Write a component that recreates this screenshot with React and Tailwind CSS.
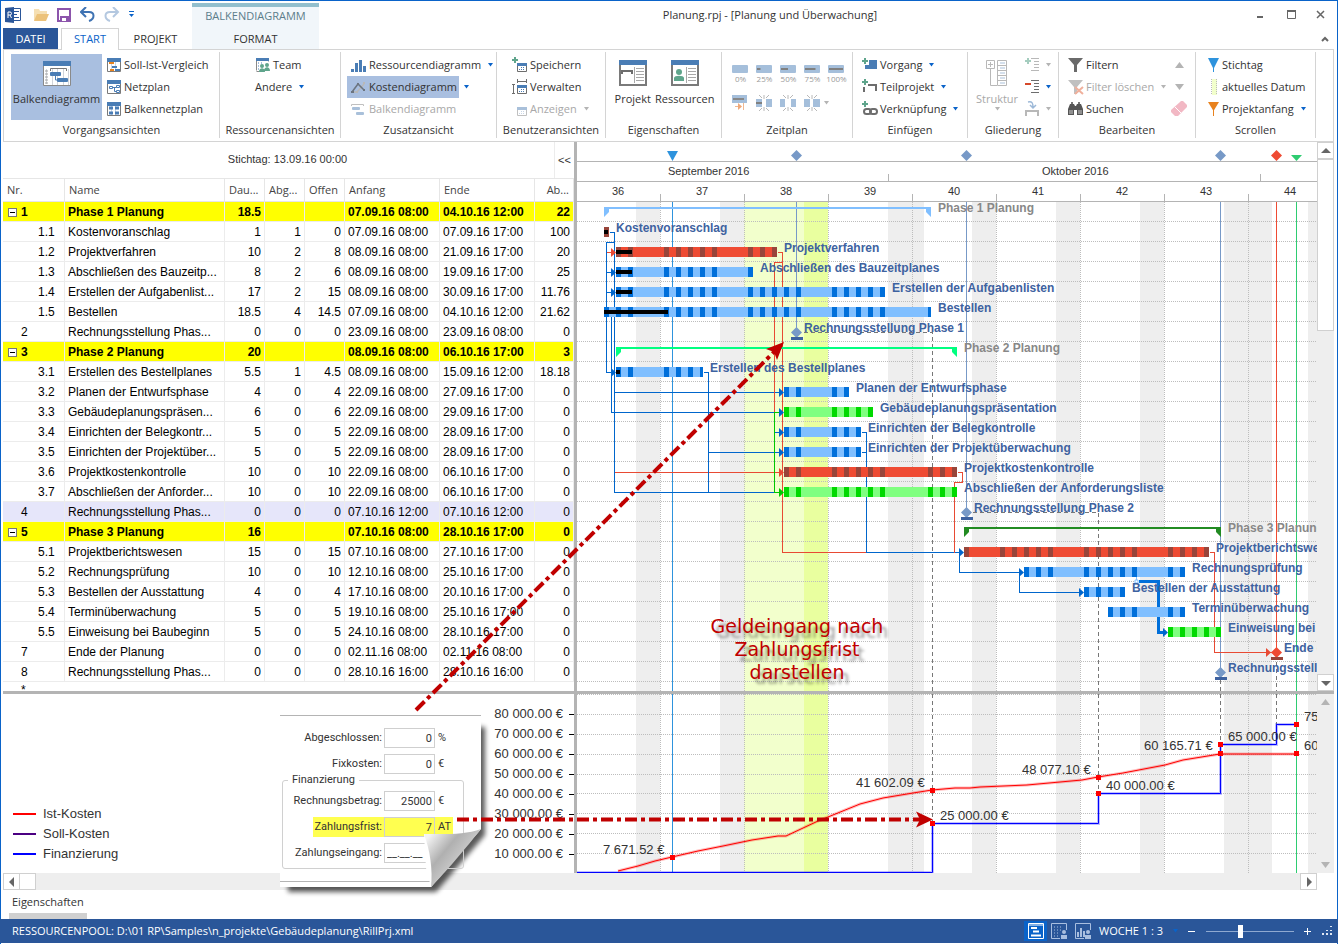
import { useState } from 'react';

const ROW_H = 20;
const AXIS_H = 60;
const DAY_W = 12;
const WEEKS_DRAWN = 20;
const PROJECT_WEEKS = [36, 37, 38, 39, 40, 41, 42, 43, 44];

// Day 0 is Monday, 5 September 2016 (week 36)
const dayX = (day, hour = 0) => day * DAY_W - 1 + hour / 2;
const HOLIDAYS = [28, 56, 57];
const isFree = (day) => day % 7 > 4 || HOLIDAYS.includes(day);

const COLORS = {
    blue: ['#80bfff', '#006fda'],
    red: ['#ef4b33', '#98453a'],
    green: ['#80ff80', '#00d900'],
};

// start / end: [day, hour]
const TASKS = [
    { nr: '1', name: 'Phase 1 Planung', label: 'Phase 1 Planung', d: '18.5', a: '', o: '', from: '07.09.16 08:00', to: '04.10.16 12:00', ab: '22', kind: 'phase', start: [2, 8], end: [29, 14], color: '#80bfff' },
    { nr: '1.1', name: 'Kostenvoranschlag', label: 'Kostenvoranschlag', d: '1', a: '1', o: '0', from: '07.09.16 08:00', to: '07.09.16 17:00', ab: '100', kind: 'bar', start: [2, 8], end: [2, 18], color: 'red', done: 4 },
    { nr: '1.2', name: 'Projektverfahren', label: 'Projektverfahren', d: '10', a: '2', o: '8', from: '08.09.16 08:00', to: '21.09.16 17:00', ab: '20', kind: 'bar', start: [3, 8], end: [16, 18], color: 'red', done: 16 },
    { nr: '1.3', name: 'Abschließen des Bauzeitp...', label: 'Abschließen des Bauzeitplanes', d: '8', a: '2', o: '6', from: '08.09.16 08:00', to: '19.09.16 17:00', ab: '25', kind: 'bar', start: [3, 8], end: [14, 18], color: 'blue', done: 16 },
    { nr: '1.4', name: 'Erstellen der Aufgabenlist...', label: 'Erstellen der Aufgabenlisten', d: '17', a: '2', o: '15', from: '08.09.16 08:00', to: '30.09.16 17:00', ab: '11.76', kind: 'bar', start: [3, 8], end: [25, 18], color: 'blue', done: 16 },
    { nr: '1.5', name: 'Bestellen', label: 'Bestellen', d: '18.5', a: '4', o: '14.5', from: '07.09.16 08:00', to: '04.10.16 12:00', ab: '21.62', kind: 'bar', start: [2, 8], end: [29, 14], color: 'blue', done: 64 },
    { nr: '2', name: 'Rechnungsstellung Phas...', label: 'Rechnungsstellung Phase 1', d: '0', a: '0', o: '0', from: '23.09.16 08:00', to: '23.09.16 08:00', ab: '0', kind: 'milestone', start: [18, 8], color: '#7799c7' },
    { nr: '3', name: 'Phase 2 Planung', label: 'Phase 2 Planung', d: '20', a: '', o: '', from: '08.09.16 08:00', to: '06.10.16 17:00', ab: '3', kind: 'phase', start: [3, 8], end: [31, 18], color: '#00ff80' },
    { nr: '3.1', name: 'Erstellen des Bestellplanes', label: 'Erstellen des Bestellplanes', d: '5.5', a: '1', o: '4.5', from: '08.09.16 08:00', to: '15.09.16 12:00', ab: '18.18', kind: 'bar', start: [3, 8], end: [10, 14], color: 'blue', done: 4 },
    { nr: '3.2', name: 'Planen der Entwurfsphase', label: 'Planen der Entwurfsphase', d: '4', a: '0', o: '4', from: '22.09.16 08:00', to: '27.09.16 17:00', ab: '0', kind: 'bar', start: [17, 8], end: [22, 18], color: 'blue' },
    { nr: '3.3', name: 'Gebäudeplanungspräsen...', label: 'Gebäudeplanungspräsentation', d: '6', a: '0', o: '6', from: '22.09.16 08:00', to: '29.09.16 17:00', ab: '0', kind: 'bar', start: [17, 8], end: [24, 18], color: 'green' },
    { nr: '3.4', name: 'Einrichten der Belegkontr...', label: 'Einrichten der Belegkontrolle', d: '5', a: '0', o: '5', from: '22.09.16 08:00', to: '28.09.16 17:00', ab: '0', kind: 'bar', start: [17, 8], end: [23, 18], color: 'blue' },
    { nr: '3.5', name: 'Einrichten der Projektüber...', label: 'Einrichten der Projektüberwachung', d: '5', a: '0', o: '5', from: '22.09.16 08:00', to: '28.09.16 17:00', ab: '0', kind: 'bar', start: [17, 8], end: [23, 18], color: 'blue' },
    { nr: '3.6', name: 'Projektkostenkontrolle', label: 'Projektkostenkontrolle', d: '10', a: '0', o: '10', from: '22.09.16 08:00', to: '06.10.16 17:00', ab: '0', kind: 'bar', start: [17, 8], end: [31, 18], color: 'red' },
    { nr: '3.7', name: 'Abschließen der Anforder...', label: 'Abschließen der Anforderungsliste', d: '10', a: '0', o: '10', from: '22.09.16 08:00', to: '06.10.16 17:00', ab: '0', kind: 'bar', start: [17, 8], end: [31, 18], color: 'green' },
    { nr: '4', name: 'Rechnungsstellung Phas...', label: 'Rechnungsstellung Phase 2', d: '0', a: '0', o: '0', from: '07.10.16 12:00', to: '07.10.16 12:00', ab: '0', kind: 'milestone', start: [32, 12], color: '#7799c7' },
    { nr: '5', name: 'Phase 3 Planung', label: 'Phase 3 Planung', d: '16', a: '', o: '', from: '07.10.16 08:00', to: '28.10.16 17:00', ab: '0', kind: 'phase', start: [32, 8], end: [53, 18], color: '#228b22' },
    { nr: '5.1', name: 'Projektberichtswesen', label: 'Projektberichtswesen', d: '15', a: '0', o: '15', from: '07.10.16 08:00', to: '27.10.16 17:00', ab: '0', kind: 'bar', start: [32, 8], end: [52, 18], color: 'red' },
    { nr: '5.2', name: 'Rechnungsprüfung', label: 'Rechnungsprüfung', d: '10', a: '0', o: '10', from: '12.10.16 08:00', to: '25.10.16 17:00', ab: '0', kind: 'bar', start: [37, 8], end: [50, 18], color: 'blue' },
    { nr: '5.3', name: 'Bestellen der Ausstattung', label: 'Bestellen der Ausstattung', d: '4', a: '0', o: '4', from: '17.10.16 08:00', to: '20.10.16 17:00', ab: '0', kind: 'bar', start: [42, 8], end: [45, 18], color: 'blue' },
    { nr: '5.4', name: 'Terminüberwachung', label: 'Terminüberwachung', d: '5', a: '0', o: '5', from: '19.10.16 08:00', to: '25.10.16 17:00', ab: '0', kind: 'bar', start: [44, 8], end: [50, 18], color: 'blue' },
    { nr: '5.5', name: 'Einweisung bei Baubeginn', label: 'Einweisung bei Baubeginn', d: '5', a: '0', o: '5', from: '24.10.16 08:00', to: '28.10.16 17:00', ab: '0', kind: 'bar', start: [49, 8], end: [53, 18], color: 'green' },
    { nr: '7', name: 'Ende der Planung', label: 'Ende der Planung', d: '0', a: '0', o: '0', from: '02.11.16 08:00', to: '02.11.16 08:00', ab: '0', kind: 'milestone', start: [58, 8], color: '#ef4b33' },
    { nr: '8', name: 'Rechnungsstellung Phas...', label: 'Rechnungsstellung Phase 3', d: '0', a: '0', o: '0', from: '28.10.16 16:00', to: '28.10.16 16:00', ab: '0', kind: 'milestone', start: [53, 16], color: '#7799c7' },
];

const BLUE = '#0066cc';
const RED = '#e84a33';
const GREEN = '#00c800';

const LINKS = [
    { c: BLUE, d: 'M32 90H37V350H202' },
    { c: BLUE, d: 'M37 100H29V230H34' },
    { c: BLUE, d: 'M29 130H34M29 150H34' },
    { c: RED, d: 'M29 110H34' },
    { c: BLUE, d: 'M34 170V270H202' },
    { c: BLUE, d: 'M37 250H202' },
    { c: RED, d: 'M37 330H202' },
    { c: BLUE, d: 'M126 230H131V350M131 310H202' },
    { c: RED, d: 'M200 110H205V410H289' },
    { c: RED, d: 'M205 120H197V270' },
    { c: GREEN, d: 'M202 270H197V350H202' },
    { c: BLUE, d: 'M197 290H202' },
    { c: BLUE, d: 'M284 290H289V410H382M284 310H289' },
    { c: RED, d: 'M380 330H385V340H377V410' },
    { c: BLUE, d: 'M382 410V430H442V450H502' },
    { c: RED, d: 'M632 410H637V510H694' },
];

const ARROWS = [
    [39, 110, RED], [39, 130, BLUE], [39, 150, BLUE], [39, 230, BLUE],
    [207, 250, BLUE], [207, 270, BLUE], [207, 290, BLUE], [207, 310, BLUE], [207, 330, RED], [207, 350, GREEN],
    [387, 410, BLUE], [447, 430, BLUE], [507, 450, BLUE], [591, 490, BLUE], [694, 510, RED],
];

const COST_Y = (v) => 178.5 - v * 0.00198;

const COST_POINTS = '41,177 61,172 78,167 95,163 121,157 146,152 175,146 201,142 209,142 241,127 251,123 283,110 306,104 336,99 355,96 378,94 393,94 403,93 450,91 505,86 521,83 546,79 588,71 606,66 643,60 719,60';

const COST_LABELS = [
    [26, 160, '7 671.52 €'], [279, 93, '41 602.09 €'], [363, 126, '25 000.00 €'], [445, 80, '48 077.10 €'],
    [529, 96, '40 000.00 €'], [567, 56, '60 165.71 €'], [651, 47, '65 000.00 €'], [727, 27, '75 000.00 €'], [727, 56, '60 165.71 €'],
];

function Caret({ off }) {
    return (
        <svg width="7" height="4" viewBox="0 0 7 4" className="shrink-0">
            <path d="M1 0h5L3.500 3.500z" fill={off ? '#b4b4b4' : '#0a63c9'} />
        </svg>
    );
}

function Icon({ w = 16, h = 16, children }) {
    return (
        <svg width={w} height={h} viewBox={`0 0 ${w} ${h}`} className="shrink-0" fill="none">
            {children}
        </svg>
    );
}

function Sheet({ children }) {
    return (
        <Icon>
            <path d="M1.500 1.500h13v13h-13z" fill="#fff" stroke="#7a7a7a" />
            <path d="M1 1h14v4H1z" fill="#4a7db5" />
            <path d="M5.500 5v9M9.500 5v9" stroke="#c5d5e8" />
            {children}
        </Icon>
    );
}

function Plus({ x = 0, y = 0, c = '#5fa58c' }) {
    return <path d={`M${x + 2} ${y}h2v2h2v2h-2v2h-2v-2h-2v-2h2z`} fill={c} />;
}

/* Ribbon icons */
const SollIst = () => (
    <Sheet><path d="M3 6h5M4 13h4" stroke="#e8821e" strokeWidth="2" /><path d="M6 10h5M9 13h5" stroke="#4a7db5" strokeWidth="2" /></Sheet>
);
const Netz = () => (
    <Icon>
        <path d="M1.500 1.500h13v13h-13z" fill="#fff" stroke="#7a7a7a" />
        <path d="M1 1h14v4H1z" fill="#4a7db5" />
        <path d="M3.500 7.500h3v2h-3zM10.500 6.500h3v2h-3zM10.500 11.500h3v2h-3zM6.500 8.500h4M8.500 8.500v4h2" stroke="#4a7db5" />
    </Icon>
);
const BalkenNetz = () => (
    <Sheet><path d="M3 7h4M9 7h4M3 12h4M9 12h4" stroke="#4a7db5" strokeWidth="3" /></Sheet>
);
const BigGantt = () => (
    <Icon w={30} h={28}>
        <path d="M1.500 1.500h27v24h-27z" fill="#fff" stroke="#8a8a8a" />
        <path d="M1 1h28v5H1z" fill="#4a7db5" />
        <path d="M4.500 9v15M10.500 9v16M15.500 9v16M21.500 9v16M26.500 9v16" stroke="#d0d4da" />
        <path d="M3 11h3M3 14h3M3 17h3M3 20h3M3 23h3" stroke="#a0a0a0" />
        <path d="M8.500 11V8.500h16V11" stroke="#777" />
        <rect x="8" y="12" width="11" height="4" rx="1" fill="#4a7db5" />
        <rect x="15" y="18" width="11" height="4" rx="1" fill="#4a7db5" />
        <path d="M13.500 16v4h2" stroke="#4a7db5" />
    </Icon>
);
const Team = () => (
    <Icon>
        <path d="M1.500 13.500v-12h12v3M1.500 14.500h3" stroke="#8a8a8a" />
        <path d="M1 1h13v3H1z" fill="#4a7db5" />
        <path d="M3 6h1M3 9h1M3 12h1M6 6h1" stroke="#4a7db5" />
        <circle cx="7" cy="9" r="2" fill="#5fa58c" /><circle cx="12" cy="8" r="2" fill="#5fa58c" />
        <path d="M4 15c0-5 6-5 6 0zM9 14c0-5 6-5 6 0z" fill="#5fa58c" />
    </Icon>
);
const Bars = () => (
    <Icon><path d="M0 12h3v3H0zM4 6h3v9H4zM8 3h3v12H8zM12 9h3v6h-3z" fill="#4a7db5" /></Icon>
);
const CostLine = () => (
    <Icon>
        <path d="M2 13h4l7-8" stroke="#b8b8b8" strokeWidth="1.500" />
        <path d="M1 13l6-8 6 6" stroke="#6c7580" strokeWidth="1.500" />
        <path d="M0 12h3v2H0zM6 4h2v2H6zM12 10h2v2h-2z" fill="#6c7580" />
        <path d="M12 3h2v2h-2zM5 12h2v2H5z" fill="#b8b8b8" />
    </Icon>
);
const GhostBars = () => (
    <Icon><path d="M.500 5V3.500h12V5" stroke="#c0c0c0" /><rect x="1" y="6" width="8" height="3" rx="1" fill="#a9c0da" /><rect x="5" y="11" width="8" height="3" rx="1" fill="#a9c0da" /></Icon>
);
const Window = ({ off, plus, dim }) => (
    <Icon>
        {plus && <Plus />}
        <path d="M5.500 6.500h9v8h-9z" fill="#fff" stroke={off ? '#c0c0c0' : '#6d6d6d'} />
        <path d="M5 6h10v3H5z" fill={off ? '#a9c0da' : '#4a7db5'} />
        <path d="M7 12.500h1M9 12.500h1M11 12.500h1M11 10.500h1M9 10.500h1" stroke={off ? '#c9d6e6' : '#4a7db5'} />
        {dim && <path d="M5.500 0v4M14.500 0v4M5 2.500h10M0 5.500h3M0 14.500h3M1.500 5v10" stroke="#6d6d6d" />}
    </Icon>
);
const Card = ({ people }) => (
    <Icon w={28} h={27}>
        <path d="M1 1h26v24H1z" fill="#fff" stroke="#7a7a7a" strokeWidth="2" />
        <path d="M0 0h28v5H0z" fill="#4a7db5" />
        <path d="M15.500 7v16" stroke="#a8a8a8" />
        <path d="M17 8.500h8M17 11.500h8M17 14.500h8M17 17.500h8M17 20.500h8" stroke="#a8a8a8" />
        {people
            ? <><circle cx="8" cy="12" r="3" fill="#5fa58c" /><path d="M3 21v-3c0-3 10-3 10 0v3z" fill="#5fa58c" /></>
            : <path d="M3 14v-3h10v3" stroke="#6d6d6d" strokeWidth="2" />}
    </Icon>
);
const PercentIcon = ({ p }) => (
    <Icon w={17} h={9}><rect width="16" height="8" rx="1" fill="#a5bfdb" />{p > 0 && <path d={`M1 4h${p * 0.14}`} stroke="#808080" strokeWidth="2" />}</Icon>
);
const Reschedule = () => (
    <Icon w={17}><rect y="0" width="15" height="8" fill="#a5bfdb" /><path d="M1 4h11" stroke="#888" strokeWidth="2" /><path d="M11.500 8v7M3 11.500h4" stroke="#efb892" /><path d="M6 8l4 3.500L6 15z" fill="#efa878" /></Icon>
);
const Split = ({ a = 6, b = 6, mark }) => (
    <Icon w={17}>
        <rect x="0" y="4" width={a} height="8" fill="#a5bfdb" /><rect x={16 - b} y="4" width={b} height="8" fill="#a5bfdb" />
        <path d="M8 0v4M8 12v4M3 0l3 3M13 0l-3 3M3 16l3-3M13 16l-3-3" stroke="#b8b8b8" />
        {mark && <path d="M0 8h6" stroke="#808080" strokeWidth="2" />}
    </Icon>
);
const AddTask = () => (<Icon><path d="M7 3h8v9H3V8h4z" fill="#4a7db5" /><Plus y={1} /></Icon>);
const AddSub = () => (<Icon><Plus /><path d="M2 13V8M6 6h8v6" stroke="#6d6d6d" strokeWidth="2" /></Icon>);
const AddLink = () => (
    <Icon><Plus /><rect x="2" y="8" width="7" height="5" rx="2.500" stroke="#6d6d6d" strokeWidth="2" /><rect x="8" y="8" width="7" height="5" rx="2.500" stroke="#6d6d6d" strokeWidth="2" /></Icon>
);
const Tree = () => (
    <Icon w={22} h={27}>
        <path d="M.500.500h8v8h-8zM4.500 2v5M2 4.500h5M4.500 9v16.500H11" stroke="#b8b8b8" />
        <path d="M11.500.500h9v25h-9zM11 5.500h10M11 10.500h10M11 15.500h10M11 20.500h10" stroke="#b8b8b8" />
        <path d="M14 3h5M14 8h5M14 13h5M14 18h5M14 23h5" stroke="#a9c0da" />
    </Icon>
);
const Outline = ({ minus }) => (
    <Icon>
        {minus ? <path d="M0 5h6" stroke="#d6492a" strokeWidth="2" /> : <Plus y={1} c="#a5cdbf" />}
        <path d="M6 1.500h8M9 4.500h5M9 7.500h5M9 10.500h5M6 13.500h8" stroke={minus ? '#6d6d6d' : '#b8b8b8'} />
    </Icon>
);
const Bridge = () => (
    <Icon><path d="M1 15v-5h12v5" stroke="#b8b8b8" strokeWidth="2" /><path d="M3 1c4-1 5 1 5 5M5 4l3 3 3-3" stroke="#9db9d8" strokeWidth="1.500" /></Icon>
);
const Funnel = ({ off }) => (
    <Icon>
        <path d="M0 1h15L9 8v7H6V8z" fill={off ? '#c0c0c0' : '#6a6a6a'} />
        {off && <path d="M7 8l8 7M15 8l-8 7" stroke="#f0b09c" strokeWidth="2" />}
    </Icon>
);
const Binoculars = () => (
    <Icon>
        <path d="M0 8l2-5h4l1 2h1l1-2h4l2 5v6H9V9H6v5H0z" fill="#555" />
        <path d="M3 1h2v2H3zM10 1h2v2h-2z" fill="#777" /><path d="M2 9v4M4 9v4M11 9v4M13 9v4" stroke="#ccc" />
    </Icon>
);
const Tri = ({ up }) => (<Icon w={9} h={6}><path d={up ? 'M0 6l4.500-6L9 6z' : 'M0 0l4.500 6L9 0z'} fill="#b4b4b4" /></Icon>);
const Eraser = () => (<Icon><path d="M9 1l1-1h2l4 4v2L7 15H4L0 11V9z" fill="#f2b8c4" /><path d="M4 6l6 6" stroke="#fff" /></Icon>);
const Pin = ({ c, h = 10 }) => (<Icon w={12}><path d={`M0 1h11L5.500 ${h}z`} fill={c} /><path d="M5.500 6v9" stroke={c} /></Icon>);
const DateBar = () => (<Icon w={12}><path d="M4 0h5v16H4z" fill="#f2ffcc" /><path d="M3.500 0v16M8.500 0v16" stroke="#bbb" strokeDasharray="1 1" /></Icon>);

function Tool({ icon, children, caret, off, on, small }) {
    return (
        <div className="flex h-[22px] items-center">
            <button
                type="button"
                disabled={off}
                aria-label={small}
                className={`flex h-[22px] items-center gap-0.5 whitespace-nowrap ${small ? '' : 'pr-0.5 pl-1'} ${on ? 'bg-[#a9bfe0]' : ''} ${off ? 'text-[#a8a8a8]' : ''}`}
            >
                {icon}
                {children}
            </button>
            {caret && <button type="button" aria-label="Mehr" className="px-1"><Caret off={off} /></button>}
        </div>
    );
}

function Group({ title, className, children }) {
    return (
        <section className={`mt-[2px] mb-[3px] flex shrink-0 flex-col border-r border-[#d4d4d4] ${className}`}>
            <div className="mt-[2px] flex h-[66px]">{children}</div>
            <h2 className="flex h-[18px] items-end justify-center">{title}</h2>
        </section>
    );
}

function TitleBar() {
    return (
        <header className="flex h-[27px] pl-[3px]">
            <div className="flex w-[188px] shrink-0 items-center gap-2 pl-px">
                <Icon>
                    <path d="M6.500 1.500h9v12h-9zM9 4.500h5M9 7.500h3M9 10.500h5" fill="#fff" stroke="#2a5699" />
                    <path d="M0 1l9-1v16l-9-1z" fill="#2a5699" />
                    <path d="M3 11V5h2a1.500 1.500 0 010 3H3M5 8l1.500 3" stroke="#fff" />
                </Icon>
                <button type="button" aria-label="Öffnen" className="ml-1"><Icon><path d="M1 14V2h5l1 2h7v3" fill="#f5dfb3" /><path d="M1 14l3-7h12l-3 7z" fill="#ecc27a" /></Icon></button>
                <button type="button" aria-label="Sichern"><Icon w={15}><path d="M1 2h12v12H1z" stroke="#8c55ac" strokeWidth="2" /><path d="M3 9h9v5H3z" fill="#8c55ac" /><path d="M5 11h4v3H5z" fill="#fff" /></Icon></button>
                <button type="button" aria-label="Rückgängig"><Icon><path d="M2 5h7c6 0 6 7 0 9" stroke="#3f73b3" strokeWidth="2" /><path d="M6 0L1 5l5 5" stroke="#3f73b3" strokeWidth="2" /></Icon></button>
                <button type="button" aria-label="Wiederholen"><Icon><path d="M13 5H6c-6 0-6 7 0 9" stroke="#b4c8e0" strokeWidth="2" /><path d="M9 0l5 5-5 5" stroke="#b4c8e0" strokeWidth="2" /></Icon></button>
                <button type="button" aria-label="Anpassen"><Icon w={7} h={7}><path d="M1 .500h5" stroke="#0a63c9" /><path d="M1 3h5L3.500 6z" fill="#0a63c9" /></Icon></button>
            </div>
            <div className="mt-0.5 flex w-[127px] shrink-0 items-center justify-center border-t-4 border-[#92bfcd] bg-[#f1f6fa] pb-1 text-[#5b7d8a]">BALKENDIAGRAMM</div>
            <h1 className="flex flex-1 items-center justify-center">Planung.rpj - [Planung und Überwachung]</h1>
            <div className="flex w-[116px] shrink-0 items-center justify-end gap-4 pr-[10px]">
                <button type="button" aria-label="Minimieren"><Icon w={14} h={12}><path d="M2 8h6" stroke="#666" strokeWidth="2" /></Icon></button>
                <button type="button" aria-label="Maximieren"><Icon w={14} h={12}><path d="M2.500 2.500h8v7h-8z" stroke="#666" /><path d="M2 2h9" stroke="#666" strokeWidth="2" /></Icon></button>
                <button type="button" aria-label="Schließen"><Icon w={12} h={12}><path d="M2 2l7 7M9 2l-7 7" stroke="#666" strokeWidth="1.500" /></Icon></button>
            </div>
        </header>
    );
}

function Tabs() {
    return (
        <nav className="flex h-[21px] pl-0.5">
            <button type="button" className="w-[55px] bg-[#2a5699] text-white">DATEI</button>
            <button type="button" className="relative z-10 -mb-px ml-[3px] w-[58px] border border-b-0 border-[#d4d4d4] bg-white pb-0.5 text-[#0a63c9]">START</button>
            <button type="button" className="w-[73px]">PROJEKT</button>
            <button type="button" className="w-[127px] bg-[#f1f6fa]">FORMAT</button>
            <button type="button" aria-label="Menüband reduzieren" className="mr-2 ml-auto"><Icon w={8} h={6}><path d="M1 5l3-3 3 3" stroke="#666" strokeWidth="2" /></Icon></button>
        </nav>
    );
}

function Ribbon() {
    return (
        <div className="mr-[3px] ml-0.5 flex h-[93px] overflow-hidden border border-[#d4d4d4]">
            <Group title="Vorgangsansichten" className="w-[216px]">
                <button type="button" className="ml-[7px] flex w-[91px] flex-col items-center bg-[#a9bfe0] pt-[6px]">
                    <BigGantt />
                    <span className="mt-[3px]">Balkendiagramm</span>
                </button>
                <div>
                    <Tool icon={<SollIst />}>Soll-Ist-Vergleich</Tool>
                    <Tool icon={<Netz />}>Netzplan</Tool>
                    <Tool icon={<BalkenNetz />}>Balkennetzplan</Tool>
                </div>
            </Group>
            <Group title="Ressourcenansichten" className="w-[121px]">
                <div className="ml-[31px]">
                    <Tool icon={<Team />}>Team</Tool>
                    <Tool caret>Andere</Tool>
                </div>
            </Group>
            <Group title="Zusatzansicht" className="w-[156px]">
                <div className="ml-[6px]">
                    <Tool icon={<Bars />} caret>Ressourcendiagramm</Tool>
                    <Tool icon={<CostLine />} caret on>Kostendiagramm</Tool>
                    <Tool icon={<GhostBars />} off>Balkendiagramm</Tool>
                </div>
            </Group>
            <Group title="Benutzeransichten" className="w-[109px]">
                <div className="ml-[11px]">
                    <Tool icon={<Window plus />}>Speichern</Tool>
                    <Tool icon={<Window dim />}>Verwalten</Tool>
                    <Tool icon={<Window off />} caret off>Anzeigen</Tool>
                </div>
            </Group>
            <Group title="Eigenschaften" className="w-[116px]">
                <div className="flex w-full justify-center gap-1 pl-0.5">
                    <button type="button" className="flex flex-col items-center pt-[6px]"><Card /><span className="mt-1">Projekt</span></button>
                    <button type="button" className="flex flex-col items-center pt-[6px]"><Card people /><span className="mt-1">Ressourcen</span></button>
                </div>
            </Group>
            <Group title="Zeitplan" className="w-[131px]">
                <div className="w-full pt-[11px] pl-[10px]">
                    <div className="flex gap-[7px] text-[8px] leading-[9px] text-[#999]">
                        {[0, 25, 50, 75, 100].map((p) => (
                            <button key={p} type="button" disabled className="flex w-[17px] flex-col items-center">
                                <PercentIcon p={p} />
                                <span>{p}%</span>
                            </button>
                        ))}
                    </div>
                    <div className="mt-3 flex items-center gap-[7px]">
                        <Reschedule />
                        <Split mark />
                        <Split a={5} b={5} />
                        <Split b={7} />
                        <div className="-ml-[5px] flex"><Caret off /></div>
                    </div>
                </div>
            </Group>
            <Group title="Einfügen" className="w-[115px]">
                <div className="ml-[5px]">
                    <Tool icon={<AddTask />} caret>Vorgang</Tool>
                    <Tool icon={<AddSub />} caret>Teilprojekt</Tool>
                    <Tool icon={<AddLink />} caret>Verknüpfung</Tool>
                </div>
            </Group>
            <Group title="Gliederung" className="w-[91px]">
                <button type="button" disabled className="ml-[8px] flex w-[42px] flex-col items-center pt-[6px] text-[#a8a8a8]">
                    <Tree />
                    <span className="mt-1">Struktur</span>
                    <Caret off />
                </button>
                <div className="ml-[7px]">
                    <Tool small="Einrücken" icon={<Outline />} caret off />
                    <Tool small="Ausrücken" icon={<Outline minus />} caret />
                    <Tool small="Sammelvorgang" icon={<Bridge />} caret off />
                </div>
            </Group>
            <Group title="Bearbeiten" className="w-[137px]">
                <div className="ml-[5px] flex-1">
                    <Tool icon={<Funnel />}>Filtern</Tool>
                    <Tool icon={<Funnel off />} caret off>Filter löschen</Tool>
                    <Tool icon={<Binoculars />}>Suchen</Tool>
                </div>
                <div className="mr-2 flex w-4 flex-col items-center">
                    <button type="button" aria-label="Vorheriger" className="flex h-[22px] items-center"><Tri up /></button>
                    <button type="button" aria-label="Nächster" className="flex h-[22px] items-center"><Tri /></button>
                    <button type="button" aria-label="Radieren" className="flex h-[22px] items-center"><Eraser /></button>
                </div>
            </Group>
            <Group title="Scrollen" className="w-[120px]">
                <div className="ml-2">
                    <Tool icon={<Pin c="#2e93dd" h={12} />}>Stichtag</Tool>
                    <Tool icon={<DateBar />}>aktuelles Datum</Tool>
                    <Tool icon={<Pin c="#e8821e" />} caret>Projektanfang</Tool>
                </div>
            </Group>
        </div>
    );
}

function TaskTable() {
    const [selected, setSelected] = useState('4');
    return (
        <div className="flex w-[571px] shrink-0 flex-col">
            <div className="flex h-9 items-center font-[Liberation_Sans,sans-serif] text-[11px]">
                <span className="flex-1 pb-0.5 pl-[18px] text-center">Stichtag: 13.09.16 00:00</span>
                <button type="button" className="h-full w-5 border-l border-[#ececec] text-[11px]">&lt;&lt;</button>
            </div>
            <table className="w-[571px] table-fixed border-separate border-spacing-0 font-[Liberation_Sans,sans-serif] text-xs text-black">
                <colgroup>
                    <col className="w-[62px]" />
                    <col className="w-[160px]" />
                    <col className="w-10" />
                    <col className="w-10" />
                    <col className="w-10" />
                    <col className="w-[95px]" />
                    <col className="w-[95px]" />
                    <col className="w-[39px]" />
                </colgroup>
                <thead>
                    <tr className="h-6 text-left font-[Open_Sans,sans-serif] text-[11px] text-[#444]">
                        {['Nr.', 'Name', 'Dau...', 'Abg...', 'Offen', 'Anfang', 'Ende', 'Ab...'].map((h, i) => (
                            <th key={h} className={`border-t border-r border-b border-[#e6e6e6] p-0 px-1 font-normal whitespace-nowrap ${i === 7 ? 'text-right' : ''}`}>{h}</th>
                        ))}
                    </tr>
                </thead>
                <tbody>
                    {TASKS.map((t) => {
                        const phase = t.kind === 'phase';
                        const bg = phase ? 'bg-[#ffff00] font-bold' : selected === t.nr ? 'bg-[#e6e6fa]' : '';
                        const cell = 'border-r border-b border-[#ececec] p-0 px-[3px] pt-px whitespace-nowrap overflow-hidden';
                        return (
                            <tr key={t.nr} className={`h-5 leading-[18px] ${bg}`} onClick={() => setSelected(t.nr)}>
                                <td className={`${cell} ${t.nr.includes('.') ? 'pl-[35px]' : phase ? 'pl-[5px]' : 'pl-[18px]'}`}>
                                    <span className="flex items-center gap-1">
                                        {phase && (
                                            <button type="button" aria-label="Zuklappen" className="flex size-[9px] items-center justify-center border border-[#777] bg-white">
                                                <span className="h-px w-[5px] bg-black" />
                                            </button>
                                        )}
                                        {t.nr}
                                    </span>
                                </td>
                                <td className={cell}>{t.name}</td>
                                <td className={`${cell} text-right`}>{t.d}</td>
                                <td className={`${cell} text-right`}>{t.a}</td>
                                <td className={`${cell} text-right`}>{t.o}</td>
                                <td className={cell}>{t.from}</td>
                                <td className={cell}>{t.to}</td>
                                <td className={`${cell} text-right`}>{t.ab}</td>
                            </tr>
                        );
                    })}
                </tbody>
            </table>
            <div className="h-[9px] overflow-hidden pl-[18px] font-[Liberation_Sans,sans-serif] text-xs text-black">*</div>
        </div>
    );
}

function Backdrop({ top, height, lines }) {
    const days = Array.from({ length: WEEKS_DRAWN * 7 }, (_, i) => i);
    return (
        <g shapeRendering="crispEdges">
            {days.filter(isFree).map((d) => <rect key={d} x={dayX(d)} y={top} width={DAY_W} height={height} fill="#eeeeee" />)}
            <rect x={dayX(14)} y={top} width={60} height={height} fill="#f2ffcc" />
            <rect x={dayX(19)} y={top} width={24} height={height} fill="#e9ff9f" />
            <g fill="none" stroke="#bdbdbd" strokeDasharray="1 1">
                {days.filter((d) => d % 7 === 0).map((d) => <path key={d} d={`M${dayX(d) + 0.5} ${top}v${height}`} />)}
                {lines.map((y) => <path key={y} d={`M0 ${y + 0.5}H1640`} />)}
            </g>
        </g>
    );
}

function Bar({ task, y }) {
    const [light, dark] = COLORS[task.color];
    const x0 = dayX(...task.start);
    const x1 = dayX(...task.end);
    const days = [];
    for (let d = task.start[0]; d <= task.end[0]; d++) if (!isFree(d)) days.push(d);
    return (
        <g shapeRendering="crispEdges">
            <rect x={x0} y={y + 5} width={x1 - x0} height="10" fill={light} />
            {days.map((d) => (
                <rect key={d} x={dayX(d, 8)} y={y + 5} width={Math.min(5, x1 - dayX(d, 8))} height="10" fill={dark} />
            ))}
            {task.done && <rect x={x0} y={y + 8} width={task.done} height="4" fill="#000" />}
        </g>
    );
}

function Phase({ task, y }) {
    const x0 = dayX(...task.start);
    const x1 = dayX(...task.end);
    return <path d={`M${x0} ${y + 5}H${x1}v10l-5-5v-3H${x0 + 5}v3l-5 5z`} fill={task.color} />;
}

function Milestone({ task, y }) {
    const x = dayX(...task.start) + 0.5;
    return (
        <g>
            <path d={`M${x} ${y + 5}l5.500 5.500l-5.500 5.500l-5.500 -5.500z`} fill={task.color} />
            <rect x={x - 5.5} y={y + 15} width="12" height="3" fill={task.nr === '7' ? '#98453a' : '#3e62a0'} />
        </g>
    );
}

const SHAPES = { bar: Bar, phase: Phase, milestone: Milestone };

function Gantt() {
    const height = AXIS_H + TASKS.length * ROW_H + 9;
    const rowY = (i) => AXIS_H + i * ROW_H;
    const milestones = TASKS.map((t, i) => ({ ...t, i })).filter((t) => t.kind === 'milestone');
    return (
        <svg width="100%" height={height} className="block min-w-0 flex-1 font-[Liberation_Sans,sans-serif]">
            <Backdrop top={AXIS_H} height={height - AXIS_H} lines={TASKS.map((_, i) => rowY(i + 1) - 1)} />

            {/* time axis */}
            <g fill="none" stroke="#b4b4b4" shapeRendering="crispEdges">
                <path d="M0 19.500H1640M0 39.500H1640M0 59.500H1640M311.500 32v7M683.500 32v7" />
                {PROJECT_WEEKS.map((w, i) => <path key={w} d={`M${dayX(i * 7) + 0.5} 52v7`} />)}
            </g>
            <g fontSize="11" fill="#333">
                <text x="91" y="33">September 2016</text>
                <text x="465" y="33">Oktober 2016</text>
                {PROJECT_WEEKS.map((w, i) => <text key={w} x={dayX(i * 7) + 42} y="53" textAnchor="middle">{w}</text>)}
            </g>
            <path d="M90 9h11l-5.500 10z" fill="#2e93dd" />
            <path d="M714 13h11l-5.500 6z" fill="#2ecc71" />
            {milestones.map((t) => {
                const x = dayX(...t.start) + 0.5;
                return <path key={t.nr} d={`M${x} 8l5.500 5.500l-5.500 5.500l-5.500 -5.500z`} fill={t.color} />;
            })}

            {/* payment dates */}
            <g fill="none" stroke="#777" strokeDasharray="4 3" shapeRendering="crispEdges">
                <path d="M227 190.500H355.500V560M396 370.500H521.500V560M643.500 538V560M699.500 520V560" />
            </g>
            <g fill="none" shapeRendering="crispEdges">
                <path d="M95.500 60V560" stroke="#2e93dd" />
                {milestones.map((t) => (
                    <path key={t.nr} d={`M${Math.floor(dayX(...t.start)) + 0.5} 60V${rowY(t.i) + 10}`} stroke={t.color} />
                ))}
                <path d="M719.500 60V560" stroke="#2ecc71" />
            </g>

            <g transform="translate(0.5 0.5)" fill="none" shapeRendering="crispEdges">
                {LINKS.map((l) => <path key={l.d} d={l.d} stroke={l.c} />)}
                <path d="M561 439H581V490H587" stroke="#006fda" strokeWidth="3" />
            </g>
            {ARROWS.map(([x, y, c]) => <path key={`${x}-${y}`} d={`M${x} ${y + 0.5}l-5 -4.500v9z`} fill={c} />)}

            {TASKS.map((t, i) => {
                const Shape = SHAPES[t.kind];
                return <Shape key={t.nr} task={t} y={rowY(i)} />;
            })}
            <path d="M559.500 435v3M558 438h3v3h-3z" stroke="#80bfff" fill="#fff" />

            <g fontSize="12" fontWeight="700">
                {TASKS.map((t, i) => (
                    <text key={t.nr} x={Math.floor(dayX(...(t.end || t.start))) + (t.kind === 'milestone' ? 8 : 7)} y={rowY(i) + 10} fill={t.kind === 'phase' ? '#888888' : '#3e62a0'}>{t.label}</text>
                ))}
            </g>
        </svg>
    );
}

function CostChart() {
    const steps = [[355, 25000], [521, 40000], [643, 65000], [699, 75000]];
    const squares = [[95, 7671], [355, 41602], [355, 25000], [521, 48077], [521, 40000], [643, 65000], [643, 60165], [719, 75000], [719, 60165]];
    const gridLines = [0, 20, 40, 60, 80, 99, 119, 139, 159];
    const stepPath = `M0 178.5${steps.map(([x, v]) => `H${x + 0.5}V${Math.round(COST_Y(v)) + 0.5}`).join('')}H719`;
    return (
        <svg width="100%" height="179" className="block min-w-0 flex-1 font-[Liberation_Sans,sans-serif]">
            <Backdrop top={0} height={179} lines={gridLines} />
            <g fill="none" shapeRendering="crispEdges">
                <path d="M355.500 0V129M521.500 0V99M643.500 0V50M699.500 0V31" stroke="#777" strokeDasharray="4 3" />
                <path d="M95.500 0V179" stroke="#2e93dd" />
                <path d="M719.500 0V179" stroke="#2ecc71" />
            </g>
            <path d={stepPath} fill="none" stroke="#0000ff" strokeOpacity="0.25" strokeWidth="3" />
            <path d={stepPath} fill="none" stroke="#0000ff" />
            <polyline points={COST_POINTS} fill="none" stroke="#ff0000" strokeOpacity="0.25" strokeWidth="3" />
            <polyline points={COST_POINTS} fill="none" stroke="#ff0000" />
            {squares.map(([x, v]) => <rect key={`${x}-${v}`} x={x - 2} y={Math.round(COST_Y(v)) - 2} width="5" height="5" fill="#ff0000" />)}
            <g fontSize="13" fill="#333">
                {COST_LABELS.map(([x, y, s]) => <text key={`${x}-${y}`} x={x} y={y}>{s}</text>)}
            </g>
        </svg>
    );
}

function Legend() {
    return (
        <div className="flex w-[571px] shrink-0 justify-between font-[Liberation_Sans,sans-serif] text-[13px]">
            <ul className="flex flex-col justify-end pb-[9px] pl-[10px]">
                <li className="flex h-5 items-center gap-[7px]"><span className="h-0.5 w-[23px] bg-[#ff0000]" />Ist-Kosten</li>
                <li className="flex h-5 items-center gap-[7px]"><span className="h-0.5 w-[23px] bg-[#4b0082]" />Soll-Kosten</li>
                <li className="flex h-5 items-center gap-[7px]"><span className="h-0.5 w-[23px] bg-[#0000ff]" />Finanzierung</li>
            </ul>
            <ul className="pt-[10px]">
                {[80, 70, 60, 50, 40, 30, 20, 10].map((k) => (
                    <li key={k} className="flex h-5 items-center justify-end gap-[6px]">
                        {k} 000.00 €
                        <span className="h-px w-[5px] bg-black" />
                    </li>
                ))}
            </ul>
        </div>
    );
}

function ScrollButton({ dir, label }) {
    const shapes = { up: 'M0 7l5-5 5 5z', down: 'M0 3l5 5 5-5z', left: 'M7 0L2 5l5 5z', right: 'M3 0l5 5-5 5z' };
    return (
        <button type="button" aria-label={label} className="flex size-[17px] shrink-0 items-center justify-center border border-[#d0d0d0] bg-white">
            <Icon w={10} h={10}><path d={shapes[dir]} fill="#666" /></Icon>
        </button>
    );
}

function Field({ id, label, value, unit, marked, left }) {
    return (
        <div className="flex h-5 items-center justify-end">
            <div className={`flex h-5 items-center justify-end gap-[2px] ${marked ? 'bg-[#ffff50] pl-0.5' : ''}`}>
                <label htmlFor={id}>{label}</label>
                <input id={id} defaultValue={value} className={`h-5 w-[51px] border border-[#cfcfcf] px-0.5 ${left ? 'text-left' : 'text-right'}`} />
            </div>
            <span className={`h-5 w-[18px] pl-[3px] leading-5 ${marked ? 'bg-[#ffff50]' : ''}`}>{unit}</span>
        </div>
    );
}

/* Torn-out piece of the properties dialog with a curled corner */
function PropertiesNote() {
    return (
        <form className="absolute top-[573px] left-[277px] h-[172px] w-[201px] font-[Roboto,sans-serif] text-[11px] text-[#333]">
            <svg width="215" height="185" className="absolute top-0 left-0">
                <defs>
                    <filter id="soft" x="-10%" y="-10%" width="130%" height="130%"><feGaussianBlur stdDeviation="2.500" /></filter>
                </defs>
                <path d="M8 12H205V120L156 177H8z" fill="#000" opacity="0.65" filter="url(#soft)" />
                <path d="M0 0H201V114L151 172H0z" fill="#fff" />
                <path d="M0 .500H201M0 166.500H150" stroke="#b4b4b4" />
            </svg>
            <div className="relative pt-[13px]">
                <div className="flex flex-col gap-[6px] pr-[28px]">
                    <Field id="abgeschlossen" label="Abgeschlossen:" value="0" unit="%" />
                    <Field id="fixkosten" label="Fixkosten:" value="0" unit="€" />
                </div>
                <fieldset className="mt-0 ml-0.5 h-[95px] w-[182px] rounded-[3px] border border-[#d0d0d0] pr-[10px]">
                    <legend className="ml-[5px] px-1 leading-[12px]">Finanzierung</legend>
                    <div className="mt-[5px] flex flex-col gap-[6px]">
                        <Field id="betrag" label="Rechnungsbetrag:" value="25000" unit="€" />
                        <Field id="frist" label="Zahlungsfrist:" value="7" unit="AT" marked />
                        <Field id="eingang" label="Zahlungseingang:" value="__.__.__" left />
                    </div>
                </fieldset>
            </div>
            <svg width="215" height="185" className="pointer-events-none absolute top-0 left-0">
                <defs>
                    <linearGradient id="curl" gradientUnits="userSpaceOnUse" x1="148" y1="122" x2="182" y2="150">
                        <stop offset="0" stopColor="#f4f4f4" />
                        <stop offset="0.500" stopColor="#b0b0b0" />
                        <stop offset="0.800" stopColor="#c4c4c4" />
                        <stop offset="1" stopColor="#606060" />
                    </linearGradient>
                </defs>
                <path d="M144 119L188 119L201 114L151 172L146 153z" fill="#fff" />
                <path d="M201 114C185 120 165 119 144 119C150 135 153 155 151 172C165 158 187 132 201 114z" fill="url(#curl)" />
            </svg>
        </form>
    );
}

function Callouts() {
    return (
        <>
            <svg width="940" height="700" className="pointer-events-none absolute top-0 left-0">
                <g stroke="#c00000" strokeWidth="4" strokeDasharray="12 4 4 4" fill="none">
                    <path d="M413 568L772 209" />
                    <path d="M454 677.500H918" />
                </g>
                <path d="M781 200l-7 18l-3-8l-8-3z" fill="#c00000" />
                <path d="M930 677.500l-17-8l4 8l-4 8z" fill="#c00000" />
            </svg>
            <p className="pointer-events-none absolute top-[473px] left-[694px] w-[200px] text-center font-[DejaVu_Sans,sans-serif] text-[19px] leading-[23px] text-[#c00000] [text-shadow:5px_5px_3px_rgba(0,0,0,0.4)]">
                Geldeingang nach<br />Zahlungsfrist<br />darstellen
            </p>
        </>
    );
}

function StatusBar() {
    return (
        <footer className="flex h-6 items-center bg-[#2a5699] pl-3 text-white">
            <span className="flex-1">RESSOURCENPOOL: D:\01 RP\Samples\n_projekte\Gebäudeplanung\RillPrj.xml</span>
            <button type="button" aria-label="Gantt" className="mr-1 flex h-[20px] w-[23px] items-center justify-center bg-[#0a63c9]">
                <Icon><path d="M.500.500h15v15H.500zM0 2h16" stroke="#fff" /><path d="M3 5h6M5 8.500h6M3 12.500h10" stroke="#fff" strokeWidth="2" /></Icon>
            </button>
            <button type="button" aria-label="Ressourcen" className="mr-2">
                <Icon><path d="M9 15.500H.500V.500h15V7" stroke="#a9bfe0" /><path d="M3 4h9M3 7h9M3 10h6M3 13h6" stroke="#a9bfe0" strokeDasharray="1 2" /><circle cx="13" cy="9" r="2" fill="#a9bfe0" /><path d="M10 12h6v4h-6z" fill="#a9bfe0" /></Icon>
            </button>
            <button type="button" aria-label="Auslastung" className="mr-2">
                <Icon><path d="M9 15.500H.500V.500h15V7" stroke="#a9bfe0" /><path d="M3 14V9M6 14V5M9 14V8" stroke="#a9bfe0" strokeWidth="2" /><circle cx="13" cy="9" r="2" fill="#a9bfe0" /><path d="M10 12h6v4h-6z" fill="#a9bfe0" /></Icon>
            </button>
            <button type="button" className="flex items-center gap-[9px]">WOCHE 1 : 3 <Caret /></button>
            <button type="button" aria-label="Verkleinern" className="ml-[9px] w-2"><Icon w={8} h={8}><path d="M0 4.500h7" stroke="#fff" /></Icon></button>
            <input
                type="range"
                aria-label="Zoom"
                defaultValue="39"
                className="mx-[10px] h-4 w-[88px] appearance-none bg-transparent [&::-webkit-slider-runnable-track]:h-px [&::-webkit-slider-runnable-track]:bg-[#8fa9d0] [&::-webkit-slider-thumb]:-mt-[6px] [&::-webkit-slider-thumb]:h-[13px] [&::-webkit-slider-thumb]:w-[5px] [&::-webkit-slider-thumb]:appearance-none [&::-webkit-slider-thumb]:bg-white"
            />
            <button type="button" aria-label="Vergrößern" className="w-2"><Icon w={8} h={8}><path d="M0 4.500h7M3.500 1v7" stroke="#fff" /></Icon></button>
            <span className="mr-[6px] ml-[10px]">
                <Icon w={10} h={10}><path d="M0 7h2v2H0zM4 7h2v2H4zM8 7h2v2H8zM4 4h2v1H4zM8 4h2v1H8zM8 0h2v1H8z" fill="#dfe7f3" /></Icon>
            </span>
        </footer>
    );
}

export default function App() {
    return (
        <div className="mr-px flex min-h-screen flex-col border-x border-t border-[#0a63c9] bg-white font-[Open_Sans,sans-serif] text-[11px] leading-4 text-[#333]">
            <TitleBar />
            <Tabs />
            <Ribbon />

            <main className="relative mr-[3px] ml-0.5 overflow-hidden">
                <div className="flex">
                    <TaskTable />
                    <div className="flex min-w-0 flex-1 border-l-[3px] border-[#b4b4b4]">
                        <Gantt />
                        <div className="flex w-[17px] shrink-0 flex-col bg-[#eeeeee]">
                            <ScrollButton dir="up" label="Nach oben" />
                            <div className="h-[172px] border border-[#d0d0d0] bg-white" />
                            <div className="flex-1" />
                            <ScrollButton dir="down" label="Nach unten" />
                        </div>
                    </div>
                </div>
                <div className="h-[3px] bg-[#b4b4b4]" />
                <div className="flex">
                    <Legend />
                    <div className="flex min-w-0 flex-1 border-l-[3px] border-[#b4b4b4]">
                        <CostChart />
                        <div className="flex w-[17px] shrink-0 flex-col items-center justify-between bg-[#eeeeee] py-[5px]">
                            <Tri up />
                            <Tri />
                        </div>
                    </div>
                </div>
                <div className="mr-[17px] flex h-[17px] bg-[#eeeeee]">
                    <ScrollButton dir="left" label="Nach links" />
                    <div className="w-4 border border-l-0 border-[#d0d0d0] bg-white" />
                    <div className="flex-1" />
                    <ScrollButton dir="right" label="Nach rechts" />
                </div>
                <button type="button" className="ml-[6px] block h-[29px] border-b-[6px] border-[#d0d0d0] px-[3px]">Eigenschaften</button>
                <PropertiesNote />
                <Callouts />
            </main>

            <div className="-mx-px mt-auto pb-px">
                <StatusBar />
            </div>
        </div>
    );
}
